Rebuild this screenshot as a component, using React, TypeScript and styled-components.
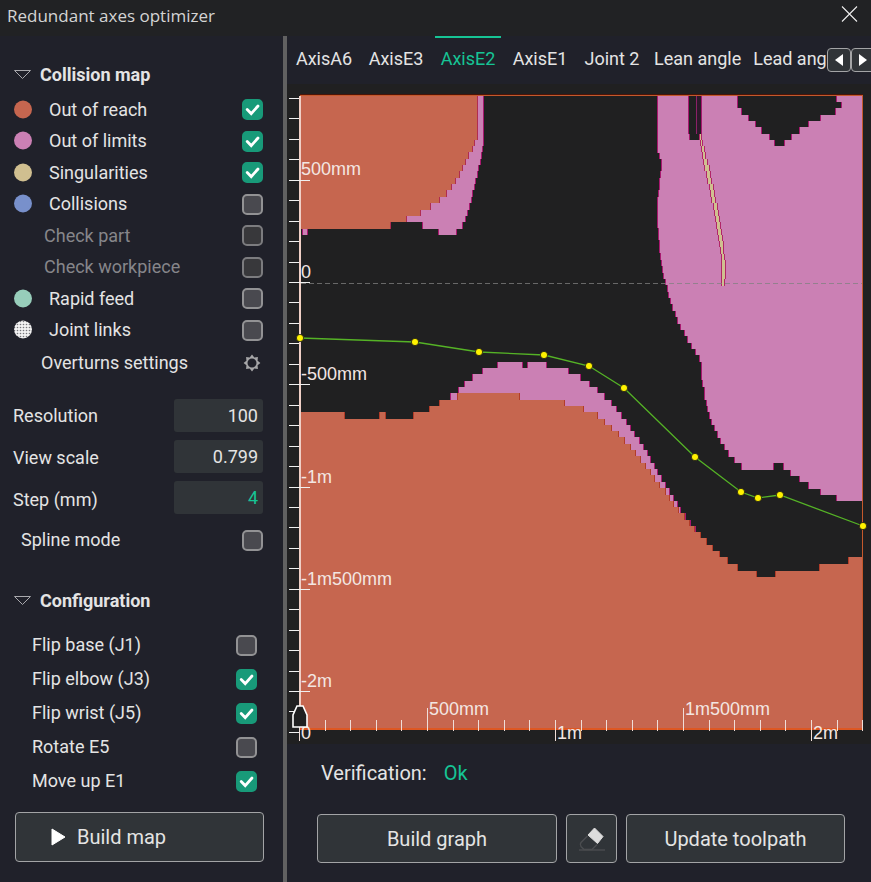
import React, { useId, useState } from "react";
import styled, { createGlobalStyle } from "styled-components";

const color = {
  title: "#212224",
  panel: "#20212a",
  field: "#303438",
  plot: "#202021",
  line: "#a3a4a6",
  text: "#e4e4e4",
  muted: "#86868a",
  accent: "#16c495",
  check: "#189a79",
  red: "#c6664f",
  pink: "#cb80b4",
  sand: "#d0bf90",
  blue: "#7890cb",
  mint: "#97cdba",
};

const GlobalStyle = createGlobalStyle`
  *, *::before, *::after { box-sizing: border-box; }
  body {
    margin: 0;
    background: ${color.panel};
    color: ${color.text};
    font: 18px/24px Roboto, "Liberation Sans", sans-serif;
  }
  button, input { font: inherit; color: inherit; }
`;

const Window = styled.div`
  display: flex;
  flex-direction: column;
  min-height: 100vh;
`;

const TitleBar = styled.header`
  display: flex;
  align-items: center;
  justify-content: space-between;
  height: 36px;
  padding: 0 12px 4px 7px;
  background: ${color.title};
`;

const Title = styled.h1`
  margin: 0;
  font: 400 17px/24px "Open Sans", "Noto Sans", sans-serif;
  color: #d4d4d4;
`;

const PlainButton = styled.button`
  display: flex;
  align-items: center;
  padding: 0;
  border: 0;
  background: none;
  cursor: pointer;
`;

const CloseButton = styled(PlainButton)`
  margin-bottom: 5px;
`;

const Body = styled.div`
  display: flex;
  flex: 1;
`;

const Sidebar = styled.aside`
  flex: 0 0 287px;
  padding: 27px 19px 20px 13px;
  border-right: 4px solid #616161;
`;

const SectionToggle = styled(PlainButton)`
  gap: 9px;
  height: 24px;
  font-weight: 700;
`;

const MapList = styled.div`
  display: grid;
  grid-template-rows: repeat(8, 1fr);
  height: 252px;
  margin-top: 7px;
  margin-right: 1px;
`;

const OptionRow = styled.label<{ $indent?: number; $muted?: boolean }>`
  display: flex;
  align-items: center;
  padding-left: ${(p) => p.$indent ?? 0}px;
  color: ${(p) => (p.$muted ? color.muted : "inherit")};
`;

const OptionText = styled.span`
  flex: 1;
`;

const Swatch = styled.svg`
  width: 20px;
  height: 20px;
  margin-right: 16px;
`;

const CheckCell = styled.span`
  display: grid;
  & > * { grid-area: 1 / 1; }
  svg { pointer-events: none; }
`;

const CheckInput = styled.input`
  appearance: none;
  width: 21px;
  height: 21px;
  margin: 0;
  border: 2px solid #929294;
  border-radius: 5px;
  background: #49494f;
  &:disabled { background: #38383b; border-color: #7c7c7f; }
  &:checked { background: ${color.check}; border-color: ${color.check}; }
`;

const SettingsRow = styled.div`
  display: flex;
  align-items: center;
  justify-content: space-between;
  height: 34px;
  padding: 0 2px 0 28px;
`;

const Parameters = styled.div`
  display: flex;
  justify-content: space-between;
  margin: 19px 1px 0 0;
`;

const ParameterLabels = styled.div`
  display: flex;
  flex-direction: column;
  gap: 18px;
  padding-top: 5px;
`;

const ParameterFields = styled.div`
  display: flex;
  flex-direction: column;
  gap: 8px;
`;

const NumberInput = styled.input<{ $accent?: boolean }>`
  width: 89px;
  height: 33px;
  padding: 0 5px;
  border: 0;
  border-radius: 3px;
  background: ${color.field};
  text-align: right;
  color: ${(p) => (p.$accent ? color.accent : color.text)};
`;

const SplineRow = styled(OptionRow)`
  height: 34px;
  margin: 9px 1px 32px 0;
`;

const ConfigList = styled.div`
  display: grid;
  grid-auto-rows: 34px;
  margin: 15px 7px 14px 19px;
`;

const ActionButton = styled.button`
  display: flex;
  align-items: center;
  justify-content: center;
  height: 49px;
  padding: 0;
  border: 1px solid ${color.line};
  border-radius: 4px;
  background: ${color.field};
  font-size: 20px;
  cursor: pointer;
`;

const BuildMapButton = styled(ActionButton)`
  justify-content: flex-start;
  gap: 11px;
  width: 249px;
  height: 50px;
  margin-left: 2px;
  padding-left: 34px;
`;

const Main = styled.main`
  flex: 1;
  min-width: 0;
`;

const TabBar = styled.div`
  display: flex;
  align-items: center;
  height: 48px;
`;

const TabList = styled.div`
  display: flex;
  flex: 1;
  gap: 6px;
  height: 100%;
  min-width: 0;
  padding-left: 4px;
  overflow: hidden;
`;

const Tab = styled.button<{ $active?: boolean }>`
  flex: none;
  min-width: 66px;
  padding: 0 3px 5px;
  border: 0;
  border-top: 2px solid ${(p) => (p.$active ? color.accent : "transparent")};
  background: none;
  color: ${(p) => (p.$active ? color.accent : color.text)};
  white-space: nowrap;
  cursor: pointer;
`;

const TabScroll = styled.div`
  display: flex;
  flex: 0 0 44px;
  overflow: hidden;
`;

const ScrollButton = styled(PlainButton)`
  flex: 0 0 24px;
  justify-content: center;
  height: 24px;
  border: 1px solid ${color.line};
  border-radius: 4px;
  background: ${color.field};
`;

const Chart = styled.svg`
  display: block;
  width: 100%;
  height: auto;
  background: ${color.plot};
  font: 18px "Liberation Sans", Arial, sans-serif;
`;

const Verification = styled.p`
  display: flex;
  align-items: center;
  gap: 17px;
  height: 57px;
  margin: 0;
  padding-left: 34px;
  font-size: 20px;
`;

const Verdict = styled.span`
  color: ${color.accent};
`;

const ActionRow = styled.div`
  display: grid;
  grid-template-columns: 240fr 51px 219fr;
  gap: 9px;
  padding: 13px 26px 19px 30px;
`;

/* Stepped outlines: start x, start y, then alternating horizontal and vertical targets. */
type Outline = number[];

const reachUpper: Outline = [
  300, 96, 477, 140, 474, 146, 472, 152, 468, 159, 465, 165, 462, 171, 459, 178, 455, 184, 451, 190,
  446, 197, 439, 203, 430, 210, 420, 216, 406, 222, 390, 229, 300, 96,
];

const limitsUpper: Outline = [
  300, 96, 483, 146, 482, 152, 481, 159, 480, 165, 478, 171, 477, 178, 475, 184, 474, 190, 472, 197,
  471, 203, 469, 210, 467, 216, 465, 222, 462, 229, 456, 235, 438, 229, 422, 222, 406, 216, 300, 96,
];

const limitsRight: Outline = [
  688, 96, 657, 153, 659, 159, 661, 171, 660, 178, 659, 190, 658, 197, 657, 228, 658, 240, 659, 253,
  660, 260, 661, 266, 662, 273, 663, 279, 665, 285, 667, 292, 668, 298, 670, 304, 672, 311, 675, 317,
  677, 324, 680, 330, 684, 336, 687, 343, 691, 349, 695, 355, 699, 362, 701, 380, 702, 387, 704, 400,
  706, 406, 707, 412, 709, 419, 711, 425, 714, 431, 717, 438, 720, 444, 724, 450, 728, 457, 734, 463,
  741, 470, 773, 463, 783, 470, 790, 476, 799, 482, 808, 489, 820, 495, 836, 501, 862, 96, 836, 102,
  841, 108, 835, 115, 820, 121, 808, 127, 799, 134, 791, 140, 784, 146, 774, 140, 769, 134, 761, 127,
  755, 121, 748, 115, 741, 108, 737, 96, 701, 134, 699, 140, 689, 134, 688, 96,
];

const limitsLower: Outline = [
  450, 400, 450, 393, 458, 387, 464, 381, 472, 374, 482, 368, 497, 362, 522, 368, 527, 362, 546, 368,
  568, 374, 580, 381, 589, 387, 597, 393, 604, 400, 611, 406, 616, 412, 621, 419, 626, 425, 630, 431,
  634, 437, 639, 444, 643, 450, 647, 456, 650, 463, 654, 469, 657, 475, 661, 482, 665, 488, 669, 495,
  673, 501, 677, 507, 680, 513, 685, 520, 690, 526, 695, 532, 450, 400,
];

const reachLower: Outline = [
  300, 412, 344, 419, 379, 412, 385, 419, 413, 412, 429, 406, 439, 400, 457, 393, 519, 400, 564, 406,
  583, 412, 597, 419, 604, 425, 611, 431, 618, 437, 624, 444, 630, 450, 635, 456, 640, 463, 645, 469,
  650, 475, 654, 482, 659, 488, 665, 495, 669, 501, 673, 507, 678, 513, 684, 520, 689, 526, 694, 532,
  700, 538, 706, 545, 712, 551, 719, 557, 727, 564, 737, 571, 756, 577, 775, 571, 819, 564, 848, 557,
  862, 730, 300, 412,
];

const singularity: Outline = [
  699, 134, 701, 140, 702, 146, 704, 152, 705, 159, 707, 165, 709, 171, 710, 178, 711, 184, 713, 190,
  714, 197, 715, 203, 717, 210, 718, 216, 719, 222, 720, 229, 721, 235, 722, 241, 723, 254, 724, 260,
  725, 279, 724, 286, 721, 254, 720, 247, 719, 241, 718, 235, 717, 229, 716, 222, 715, 216, 714, 210,
  713, 203, 711, 197, 710, 190, 709, 184, 707, 178, 706, 171, 704, 165, 703, 159, 702, 152, 701, 146,
  700, 140, 699, 134,
];

function fillPath(o: Outline) {
  let d = `M${o[0]} ${o[1]}`;
  for (let i = 2; i < o.length; i += 2) d += `H${o[i]}V${o[i + 1]}`;
  return d + "Z";
}

function edgePath(o: Outline) {
  let d = "";
  for (let i = 2; i < o.length; i += 2) d += `M${o[i]} ${o[i - 1]}V${o[i + 1]}`;
  return d;
}

function Region({ outline, fill, edge }: { outline: Outline; fill: string; edge: string }) {
  return (
    <g shapeRendering="crispEdges">
      <path d={fillPath(outline)} fill={fill} />
      <path d={edgePath(outline)} stroke={edge} fill="none" />
    </g>
  );
}

const toolpath = [
  [300, 338], [415, 342], [479, 352], [544, 355], [589, 366], [624, 388],
  [695, 457], [741, 492], [758, 498], [780, 495], [863, 526],
];

const yLabels: [string, number][] = [
  ["500mm", 175], ["0", 278], ["-500mm", 380], ["-1m", 483], ["-1m500mm", 585], ["-2m", 687],
];

const xLabels: [string, number, number][] = [
  ["0", 301, 739], ["500mm", 429, 715], ["1m", 557, 739], ["1m500mm", 685, 715], ["2m", 813, 739],
];

function yTicks() {
  let d = "";
  for (let k = -9; k <= 22; k++) {
    const y = Math.round(282 + k * 20.45);
    d += `M289 ${y}.5H${k % 5 === 0 ? 310 : 299}`;
  }
  return d;
}

function xTicks() {
  let d = "";
  for (let k = 0; k <= 22; k++) {
    const x = Math.floor(299.5 + k * 25.6);
    const top = k % 10 === 5 ? 708 : 720;
    const bottom = k % 10 === 0 ? 741 : 731;
    d += `M${x}.5 ${top}V${bottom}`;
  }
  return d;
}

function CollisionChart() {
  return (
    <Chart viewBox="287 84 584 660" role="img" aria-label="Collision map for AxisE2">
      <Region outline={limitsUpper} fill={color.pink} edge="#a8186f" />
      <Region outline={reachUpper} fill={color.red} edge="#b02c50" />
      <Region outline={[302, 229, 307, 235, 302, 229]} fill={color.pink} edge="#a8186f" />
      <Region outline={limitsRight} fill={color.pink} edge="#a8186f" />
      <g shapeRendering="crispEdges">
        <rect x="697" y="96" width="4" height="38" fill="#2c1a2a" />
        <path d="M696.5 96V134" stroke="#8c2068" />
      </g>
      <Region outline={singularity} fill={color.sand} edge="#b02668" />
      <Region outline={limitsLower} fill={color.pink} edge="#a8186f" />
      <Region outline={reachLower} fill={color.red} edge="#b23c28" />
      <g shapeRendering="crispEdges" fill="none">
        <path d="M301 283.5H862" stroke="#808080" strokeOpacity="0.75" strokeDasharray="5 3" />
        <path d="M300 94.5H863" stroke="#4c1408" />
        <path d="M300 95.5H863" stroke="#c4592c" />
        <path d="M862.5 95V730" stroke="#c4592c" />
        <path d="M300 729H863" stroke="#de5722" strokeWidth="2" />
        <path d="M300 96V706" stroke="#efcfc6" strokeWidth="2" />
        <path d={yTicks()} stroke="#f0f0f0" />
        <path d={xTicks()} stroke="#f0ded8" />
      </g>
      <g fill="#f3e6e2">
        {yLabels.map(([label, y]) => (
          <text key={label} x="301" y={y}>{label}</text>
        ))}
        {xLabels.map(([label, x, y]) => (
          <text key={label} x={x} y={y}>{label}</text>
        ))}
      </g>
      <path d="M293 727V715L297 706H303L307 715V727Z" fill={color.plot} stroke="#fff" strokeWidth="1.6" />
      <polyline points={toolpath.map((p) => p.join(",")).join(" ")} fill="none" stroke="#55b326" strokeWidth="1.3" />
      {toolpath.map(([x, y]) => (
        <circle key={x} cx={x} cy={y} r="3.6" fill="#fff200" stroke="#1c1c12" strokeWidth="0.8" />
      ))}
    </Chart>
  );
}

function Checkbox({ initial, disabled }: { initial?: boolean; disabled?: boolean }) {
  const [on, setOn] = useState(!!initial);
  return (
    <CheckCell>
      <CheckInput type="checkbox" checked={on} disabled={disabled} onChange={() => setOn(!on)} />
      {on && (
        <svg width="21" height="21" viewBox="0 0 21 21" fill="none" stroke="#fff" strokeWidth="2.8" strokeLinecap="round">
          <path d="M5.2 10.6L9.2 14.6L16 7" />
        </svg>
      )}
    </CheckCell>
  );
}

function Dot({ fill }: { fill: string }) {
  const id = useId();
  const dotted = fill === "dotted";
  return (
    <Swatch viewBox="0 0 20 20" aria-hidden="true">
      {dotted && (
        <pattern id={id} width="3" height="3" patternUnits="userSpaceOnUse">
          <rect width="3" height="3" fill="#f2f2f2" />
          <circle cx="1.5" cy="1.5" r="0.8" fill="#77777c" />
        </pattern>
      )}
      <circle cx="10" cy="9.5" r="9" fill={dotted ? `url(#${id})` : fill} />
    </Swatch>
  );
}

function SectionHeader({ children }: { children: string }) {
  return (
    <SectionToggle type="button" aria-expanded="true">
      <svg width="18" height="12" viewBox="0 0 18 12" fill="none" stroke="#a9a9ad">
        <path d="M1.5 1.5H17.5L9.5 9.5Z" />
      </svg>
      {children}
    </SectionToggle>
  );
}

const mapOptions = [
  { label: "Out of reach", fill: color.red, on: true },
  { label: "Out of limits", fill: color.pink, on: true },
  { label: "Singularities", fill: color.sand, on: true },
  { label: "Collisions", fill: color.blue },
  { label: "Check part", disabled: true },
  { label: "Check workpiece", disabled: true },
  { label: "Rapid feed", fill: color.mint },
  { label: "Joint links", fill: "dotted" },
];

const configOptions = [
  { label: "Flip base (J1)" },
  { label: "Flip elbow (J3)", on: true },
  { label: "Flip wrist (J5)", on: true },
  { label: "Rotate E5" },
  { label: "Move up E1", on: true },
];

const tabs = ["AxisA6", "AxisE3", "AxisE2", "AxisE1", "Joint 2", "Lean angle", "Lead angle"];

export default function App() {
  const [active, setActive] = useState("AxisE2");
  return (
    <Window>
      <GlobalStyle />
      <TitleBar>
        <Title>Redundant axes optimizer</Title>
        <CloseButton type="button" aria-label="Close">
          <svg width="18" height="18" viewBox="0 0 18 18" stroke="#ededed" strokeWidth="1.1">
            <path d="M1 1.5L16 16.5M16 1.5L1 16.5" />
          </svg>
        </CloseButton>
      </TitleBar>
      <Body>
        <Sidebar>
          <SectionHeader>Collision map</SectionHeader>
          <MapList>
            {mapOptions.map((o) => (
              <OptionRow key={o.label} $indent={o.disabled ? 31 : 0} $muted={o.disabled}>
                {o.fill && <Dot fill={o.fill} />}
                <OptionText>{o.label}</OptionText>
                <Checkbox initial={o.on} disabled={o.disabled} />
              </OptionRow>
            ))}
          </MapList>
          <SettingsRow>
            Overturns settings
            <PlainButton type="button" aria-label="Overturns settings">
              <svg width="20" height="20" viewBox="0 0 20 20" fill="#a6a6a8" fillRule="evenodd">
                <path
                  d="M10 1.6L12.3 4.4L15.9 4.1L15.6 7.7L18.4 10L15.6 12.3L15.9 15.9L12.3 15.6L10 18.4L7.7 15.6L4.1 15.9L4.4 12.3L1.6 10L4.4 7.7L4.1 4.1L7.7 4.4ZM10 5.5A4.5 4.5 0 1 0 10 14.5A4.5 4.5 0 1 0 10 5.5Z"
                />
              </svg>
            </PlainButton>
          </SettingsRow>
          <Parameters>
            <ParameterLabels>
              <label htmlFor="resolution">Resolution</label>
              <label htmlFor="scale">View scale</label>
              <label htmlFor="step">Step (mm)</label>
            </ParameterLabels>
            <ParameterFields>
              <NumberInput id="resolution" defaultValue="100" />
              <NumberInput id="scale" defaultValue="0.799" />
              <NumberInput id="step" defaultValue="4" $accent />
            </ParameterFields>
          </Parameters>
          <SplineRow $indent={8}>
            <OptionText>Spline mode</OptionText>
            <Checkbox />
          </SplineRow>
          <SectionHeader>Configuration</SectionHeader>
          <ConfigList>
            {configOptions.map((o) => (
              <OptionRow key={o.label}>
                <OptionText>{o.label}</OptionText>
                <Checkbox initial={o.on} />
              </OptionRow>
            ))}
          </ConfigList>
          <BuildMapButton type="button">
            <svg width="16" height="18" viewBox="0 0 16 18" fill="#fff">
              <path d="M2 1L15 9L2 17Z" stroke="#fff" strokeLinejoin="round" />
            </svg>
            Build map
          </BuildMapButton>
        </Sidebar>
        <Main>
          <TabBar>
            <TabList role="tablist">
              {tabs.map((t) => (
                <Tab key={t} type="button" role="tab" aria-selected={t === active} $active={t === active} onClick={() => setActive(t)}>
                  {t}
                </Tab>
              ))}
            </TabList>
            <TabScroll>
              <ScrollButton type="button" aria-label="Previous tabs">
                <svg width="8" height="12" viewBox="0 0 8 12" fill="#fff"><path d="M8 0V12L0 6Z" /></svg>
              </ScrollButton>
              <ScrollButton type="button" aria-label="Next tabs">
                <svg width="8" height="12" viewBox="0 0 8 12" fill="#fff"><path d="M0 0V12L8 6Z" /></svg>
              </ScrollButton>
            </TabScroll>
          </TabBar>
          <CollisionChart />
          <Verification>
            Verification: <Verdict>Ok</Verdict>
          </Verification>
          <ActionRow>
            <ActionButton type="button">Build graph</ActionButton>
            <ActionButton type="button" aria-label="Erase graph">
              <svg width="28" height="26" viewBox="0 0 28 26" fill="none">
                <path d="M9.5 10L3 16.5Q1.5 18.5 3 20.5L6 23.5H14L19 18.5" stroke="#4b4d50" strokeWidth="1.4" />
                <path d="M1 24H27" stroke="#4b4d50" strokeWidth="1.4" />
                <path d="M16.5 2L25 10.5L19.5 17.5L10 9Z" fill="#dcdcdc" stroke="#dcdcdc" strokeLinejoin="round" />
              </svg>
            </ActionButton>
            <ActionButton type="button">Update toolpath</ActionButton>
          </ActionRow>
        </Main>
      </Body>
    </Window>
  );
}
